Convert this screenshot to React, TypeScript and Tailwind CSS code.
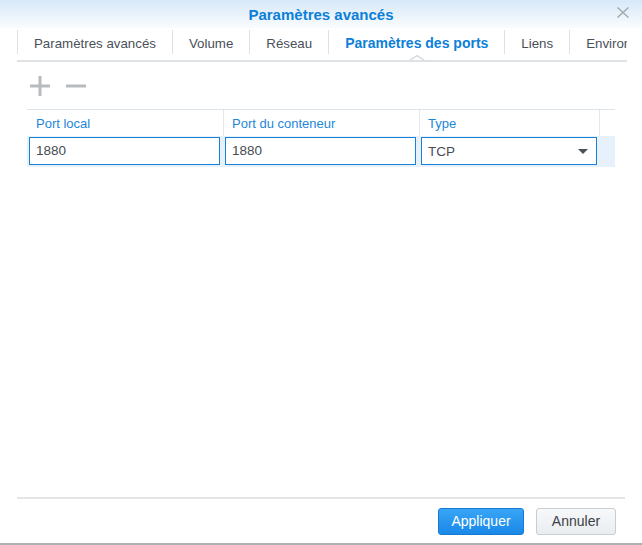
import React from "react";

const tabs = [
  "Paramètres avancés",
  "Volume",
  "Réseau",
  "Paramètres des ports",
  "Liens",
  "Environnement",
];

export default function App() {
  return (
    <div className="w-[642px] h-[545px] bg-white flex flex-col font-['Liberation_Sans',Arial,sans-serif] overflow-hidden">
      {/* Title bar */}
      <div className="relative h-[28px] shrink-0 bg-gradient-to-b from-[#d7e8f8] to-[#fafcfe] flex items-center justify-center">
        <span className="text-[15px] font-bold text-[#0b80d8] leading-none">
          Paramètres avancés
        </span>
        <svg
          className="absolute right-[13px] top-[7px]"
          width="12"
          height="11"
          viewBox="0 0 12 11"
        >
          <path d="M0.5 0.5 L11.5 10.5 M11.5 0.5 L0.5 10.5" stroke="#a3a8ad" strokeWidth="1.4" fill="none" />
        </svg>
      </div>

      {/* Tabs */}
      <div className="mx-[17px] w-[610px] shrink-0 pt-[2px] pb-[6px] border-b-2 border-[#dfe2e5] overflow-hidden">
        <div className="flex h-[24px] whitespace-nowrap">
          {tabs.map((t, i) => {
            const active = i === 3;
            return (
              <div
                key={t}
                className={
                  "relative shrink-0 flex items-center px-[16px] border-l border-[#dae1e8] " +
                  (active
                    ? "text-[14px] font-bold text-[#0b80d8]"
                    : "text-[13.3px] text-[#4a5059]")
                }
              >
                <span className="pt-[3px]">{t}</span>
                {active && (
                  <svg
                    className="absolute left-1/2 -translate-x-1/2 top-[25px]"
                    width="16"
                    height="8"
                    viewBox="0 0 16 8"
                  >
                    <rect x="0" y="5" width="16" height="3" fill="white" />
                    <polygon points="1,6 8,0.8 15,6 15,8 1,8" fill="white" />
                    <polyline points="0,5.8 8,0.6 16,5.8" fill="none" stroke="#d3d7db" strokeWidth="1.3" />
                  </svg>
                )}
              </div>
            );
          })}
        </div>
      </div>

      {/* Toolbar */}
      <div className="flex items-center gap-[16px] ml-[30px] mt-[14px] shrink-0">
        <svg width="20" height="20" viewBox="0 0 20 20">
          <path d="M10 0 V20 M0 10 H20" stroke="#b7bbbf" strokeWidth="3" fill="none" />
        </svg>
        <svg width="20" height="20" viewBox="0 0 20 20">
          <path d="M0 10 H20" stroke="#b7bbbf" strokeWidth="3" fill="none" />
        </svg>
      </div>

      {/* Grid */}
      <div className="mx-[27px] mt-[13px] w-[588px] shrink-0 text-[13px]">
        <div className="flex h-[27px] border-t border-[#dde4ea]">
          <div className="w-[197px] border-r border-[#e3e8ed] flex items-center pl-[9px] pt-[1px] text-[#1d87d9]">
            Port local
          </div>
          <div className="w-[196px] border-r border-[#e3e8ed] flex items-center pl-[8px] pt-[1px] text-[#1d87d9]">
            Port du conteneur
          </div>
          <div className="w-[180px] border-r border-[#e3e8ed] flex items-center pl-[8px] pt-[1px] text-[#1d87d9]">
            Type
          </div>
          <div className="flex-1" />
        </div>
        <div className="flex h-[31px] bg-[#e7f1fb] pt-[1px]">
          <div className="w-[197px] pl-[2px]">
            <div className="w-[191px] h-[28px] bg-white border border-[#1a80d5] flex items-center pl-[6px] pt-[1px] text-[13.5px] text-[#474c52]">
              1880
            </div>
          </div>
          <div className="w-[196px] pl-[1px]">
            <div className="w-[191px] h-[28px] bg-white border border-[#1a80d5] flex items-center pl-[6px] pt-[1px] text-[13.5px] text-[#474c52]">
              1880
            </div>
          </div>
          <div className="w-[180px] pl-[1px]">
            <div className="w-[176px] h-[28px] bg-white border border-[#1a80d5] flex items-center justify-between pl-[6px] pr-[8px] text-[13.5px] text-[#474c52]">
              <span className="pt-[2px]">TCP</span>
              <svg width="10" height="5" viewBox="0 0 10 5">
                <polygon points="0,0 10,0 5,5" fill="#4d5258" />
              </svg>
            </div>
          </div>
          <div className="flex-1" />
        </div>
      </div>

      <div className="flex-1" />

      {/* Footer */}
      <div className="mx-[17px] border-t-2 border-[#e4e5e6] shrink-0" />
      <div className="flex justify-end gap-[12px] pr-[26px] pt-[9px] pb-[8px] shrink-0">
        <button className="w-[86px] h-[27px] rounded-[3px] border border-[#1679d3] bg-gradient-to-b from-[#38a5f6] to-[#1888e8] text-white text-[14px] flex items-center justify-center">
          Appliquer
        </button>
        <button className="w-[80px] h-[27px] rounded-[3px] border border-[#c8cdd2] bg-gradient-to-b from-[#f7f8fa] to-[#eaedf0] text-[#3b4148] text-[14px] flex items-center justify-center">
          Annuler
        </button>
      </div>
      <div className="h-[2px] bg-[#b0b0b0] shrink-0" />
    </div>
  );
}
